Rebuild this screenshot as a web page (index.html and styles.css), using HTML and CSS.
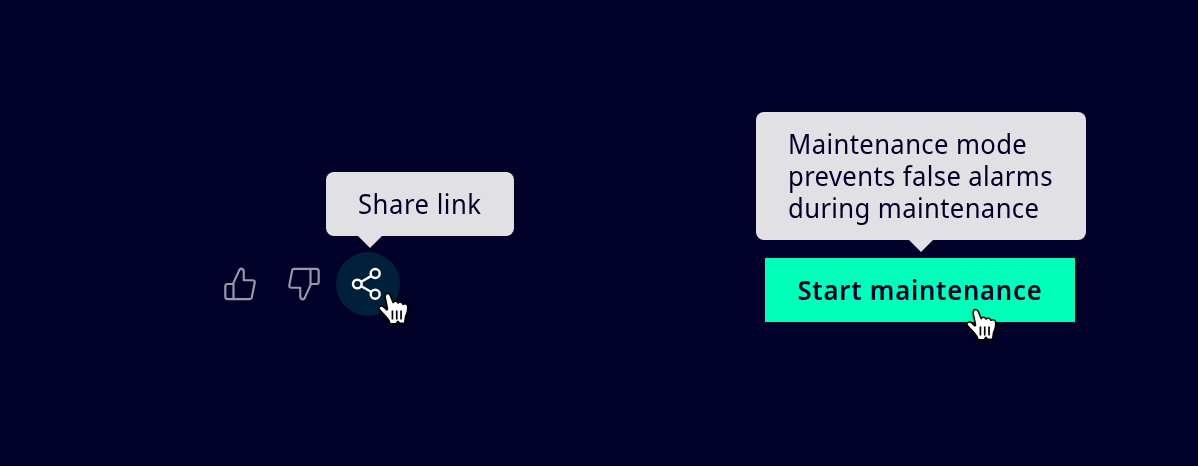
FILE: index.html
```
<!DOCTYPE html>
<html lang="en">
<head>
<meta charset="utf-8">
<title>Tooltips</title>
<link rel="stylesheet" href="styles.css">
</head>
<body>
<svg class="defs" aria-hidden="true">
  <symbol id="hand" viewBox="0 0 36 40">
    <path d="M8.200 5.200C9.300 3.800 11.700 4.200 12.500 6.200L15.300 13C16.300 11.200 19 11.300 20 13.500C21.200 11.900 23.700 12.200 24.700 14.700C26.700 13.200 29.300 14.500 29.200 17.500C29.200 21 28.200 24 27 26.500L26.200 32.500L21.500 32.600L19.800 30.800L18 33H12.300C11.600 28.500 8 26 5.700 23.300C4.500 22 2 19.800 1.700 18.600C1.500 16.300 4.300 15.400 6.500 17.300L9.200 20L10 19L8 9.200C7.500 7.300 7.500 6.100 8.200 5.200Z" fill="#fff" stroke="#000" stroke-width="1.4" stroke-linejoin="round"/>
    <path d="M14.600 20.500v8.500M18.700 20.500v8.500M22.800 20.500v8.500" fill="none" stroke="#000" stroke-width="1.6"/>
  </symbol>
</svg>
<main class="stage">
  <section class="example share">
    <div class="tooltip share-tip"><span class="label">Share link</span></div>
    <div class="actions">
      <button class="icon" aria-label="Like"><svg viewBox="-1.4 -2 68 68"><path d="M26 30l6-13c1.200-2.200 4.600-1.200 4.600 1.500V28H46c1.700 0 2.500 1.100 2.200 2.700l-3 15.500c-.2 1.200-1 1.800-2.200 1.800H19.500c-1.600 0-2.500-.9-2.500-2.500v-11c0-1.600.9-2.500 2.500-2.500H25M25.700 30v18"/></svg></button>
      <button class="icon" aria-label="Dislike"><svg viewBox="-2.6 -2 68 68"><path d="M38 34l-6 13c-1.200 2.200-4.600 1.200-4.600-1.500V36H18c-1.700 0-2.500-1.100-2.200-2.700l3-15.500c.2-1.200 1-1.800 2.200-1.800h23.500c1.600 0 2.500.9 2.500 2.500v11c0 1.600-.9 2.500-2.500 2.500H39M38.300 34V16"/></svg></button>
      <button class="icon active" aria-label="Share"><svg viewBox="0 0 64 64"><circle cx="21.300" cy="32" r="4.300"/><circle cx="39.200" cy="21.500" r="4.500"/><circle cx="39.200" cy="42.200" r="4.500"/><path d="M25.300 29.700l9.700-5.600M25.300 34.300l9.700 5.500"/></svg>
        <svg class="cursor share-cursor"><use href="#hand"/></svg></button>
    </div>
  </section>
  <section class="example maintenance">
    <div class="tooltip mode-tip"><span class="label">Maintenance mode<br>prevents false alarms<br>during maintenance</span></div>
    <button class="primary"><span class="button-label">Start maintenance</span><svg class="cursor start-cursor"><use href="#hand"/></svg></button>
  </section>
</main>
</body>
</html>
```
FILE: styles.css
```
* { box-sizing: border-box; }
body { margin: 0; background: #000028; font-family: "Noto Sans", sans-serif; color: #000028; }
.defs { position: absolute; width: 0; height: 0; }
.stage { height: 466px; display: flex; align-items: flex-start; overflow: hidden; }
.example { display: flex; flex-direction: column; }
.share { width: 306px; margin: 172px 0 0 208px; }
.maintenance { width: 330px; margin: 112px 0 0 242px; align-items: center; }
.tooltip { position: relative; display: flex; flex-direction: column; align-items: flex-start; background: #e1e0e5; border-radius: 8px; padding: 16px 32px; font-size: 27px; line-height: 32px; white-space: nowrap; }
.tooltip::after { content: ""; position: absolute; top: 100%; border: 12px solid transparent; border-top-color: #e1e0e5; border-bottom: 0; }
.label { transform: scaleX(.95); transform-origin: left; }
.share-tip { width: 188px; height: 64px; align-self: flex-end; letter-spacing: .55px; }
.share-tip::after { left: 32px; }
.mode-tip { width: 330px; height: 128px; letter-spacing: .4px; }
.mode-tip::after { left: 153px; }
.actions { display: flex; margin-top: 16px; }
.icon { position: relative; width: 64px; height: 64px; padding: 0; border: 0; border-radius: 50%; background: none; color: #9999a9; }
.icon > svg:first-child { display: block; width: 64px; height: 64px; fill: none; stroke: currentColor; stroke-width: 2.3; stroke-linejoin: round; }
.icon.active { background: #001f39; color: #fff; }
.icon.active > svg:first-child { stroke-width: 2.4; }
.primary { position: relative; width: 310px; height: 64px; margin: 18px 2px 0 0; padding: 0; border: 0; background: #00ffb9; color: #000028; font: 600 27px/64px "Noto Sans", sans-serif; letter-spacing: .8px; white-space: nowrap; }
.button-label { display: inline-block; transform: scaleX(.95); }
.cursor { position: absolute; width: 38px; height: 42px; filter: drop-shadow(0 1px 1px rgba(0, 0, 0, .45)); }
.share-cursor { left: 41px; top: 37px; }
.start-cursor { left: 200px; top: 47px; }
```
